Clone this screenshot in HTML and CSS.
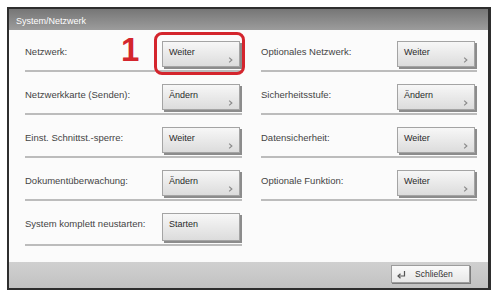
FILE: index.html
```html
<!DOCTYPE html>
<html lang="de">
<head>
    <meta charset="UTF-8">
    <meta name="viewport" content="width=device-width, initial-scale=1.0">
    <title>System/Netzwerk</title>
    <link rel="stylesheet" href="styles.css">
</head>
<body>
    <div class="window">
        <div class="titlebar">System/Netzwerk</div>

        <div class="content">
            <div class="col">
                <div class="row">
                    <span class="label">Netzwerk:</span>
                    <div class="btn-wrap">
                        <span class="step">1</span>
                        <button class="btn">
                            <span>Weiter</span>
                            <svg class="chev" width="7" height="9" viewBox="0 0 7 9"><path d="M1.5 1 L5.5 4.5 L1.5 8" fill="none" stroke="#8a8a8a" stroke-width="1.8"/></svg>
                        </button>
                        <span class="ring"></span>
                    </div>
                </div>
                <div class="row">
                    <span class="label">Netzwerkkarte (Senden):</span>
                    <button class="btn">
                        <span>Ändern</span>
                        <svg class="chev" width="7" height="9" viewBox="0 0 7 9"><path d="M1.5 1 L5.5 4.5 L1.5 8" fill="none" stroke="#8a8a8a" stroke-width="1.8"/></svg>
                    </button>
                </div>
                <div class="row">
                    <span class="label">Einst. Schnittst.-sperre:</span>
                    <button class="btn">
                        <span>Weiter</span>
                        <svg class="chev" width="7" height="9" viewBox="0 0 7 9"><path d="M1.5 1 L5.5 4.5 L1.5 8" fill="none" stroke="#8a8a8a" stroke-width="1.8"/></svg>
                    </button>
                </div>
                <div class="row">
                    <span class="label">Dokumentüberwachung:</span>
                    <button class="btn">
                        <span>Ändern</span>
                        <svg class="chev" width="7" height="9" viewBox="0 0 7 9"><path d="M1.5 1 L5.5 4.5 L1.5 8" fill="none" stroke="#8a8a8a" stroke-width="1.8"/></svg>
                    </button>
                </div>
                <div class="row">
                    <span class="label">System komplett neustarten:</span>
                    <button class="btn btn-tall">
                        <span>Starten</span>
                    </button>
                </div>
            </div>

            <div class="col">
                <div class="row">
                    <span class="label">Optionales Netzwerk:</span>
                    <button class="btn">
                        <span>Weiter</span>
                        <svg class="chev" width="7" height="9" viewBox="0 0 7 9"><path d="M1.5 1 L5.5 4.5 L1.5 8" fill="none" stroke="#8a8a8a" stroke-width="1.8"/></svg>
                    </button>
                </div>
                <div class="row">
                    <span class="label">Sicherheitsstufe:</span>
                    <button class="btn">
                        <span>Ändern</span>
                        <svg class="chev" width="7" height="9" viewBox="0 0 7 9"><path d="M1.5 1 L5.5 4.5 L1.5 8" fill="none" stroke="#8a8a8a" stroke-width="1.8"/></svg>
                    </button>
                </div>
                <div class="row">
                    <span class="label">Datensicherheit:</span>
                    <button class="btn">
                        <span>Weiter</span>
                        <svg class="chev" width="7" height="9" viewBox="0 0 7 9"><path d="M1.5 1 L5.5 4.5 L1.5 8" fill="none" stroke="#8a8a8a" stroke-width="1.8"/></svg>
                    </button>
                </div>
                <div class="row">
                    <span class="label">Optionale Funktion:</span>
                    <button class="btn">
                        <span>Weiter</span>
                        <svg class="chev" width="7" height="9" viewBox="0 0 7 9"><path d="M1.5 1 L5.5 4.5 L1.5 8" fill="none" stroke="#8a8a8a" stroke-width="1.8"/></svg>
                    </button>
                </div>
            </div>
        </div>

        <div class="footer">
            <button class="close-btn">
                <svg width="10" height="9" viewBox="0 0 10 9"><path d="M8.5 1 V6 H2.5" fill="none" stroke="#555" stroke-width="1.2"/><path d="M4.5 3.8 L2 6 L4.5 8.2" fill="none" stroke="#555" stroke-width="1.2"/></svg>
                <span>Schließen</span>
            </button>
        </div>
    </div>
</body>
</html>
```

FILE: styles.css
```css
body {
    margin: 0;
    padding: 7px 0 0 7px;
    background: #ffffff;
    font-family: "Liberation Sans", Arial, sans-serif;
}
.window {
    box-sizing: border-box;
    width: 484px;
    height: 283px;
    border: 2px solid #2e2e2e;
    border-right-width: 3px;
    background: #fbfbfb;
    display: flex;
    flex-direction: column;
}
.titlebar {
    height: 21px;
    box-sizing: border-box;
    padding: 7px 0 0 7px;
    background: linear-gradient(#767676, #9c9c9c);
    color: #ffffff;
    font-size: 9px;
}
.content {
    flex: 1;
    display: grid;
    grid-template-columns: 217px 216px;
    column-gap: 19px;
    padding: 11px 0 0 16px;
}
.row {
    display: flex;
    justify-content: space-between;
    align-items: flex-start;
    padding-bottom: 3px;
    border-bottom: 2px solid #bcbcbc;
    margin-bottom: 12px;
}
.label {
    padding-top: 5px;
    font-size: 9.5px;
    color: #444444;
}
.btn {
    box-sizing: border-box;
    width: 78px;
    height: 26px;
    padding: 5px 5px 3px 6px;
    border: 1px solid #a4a4a4;
    background: linear-gradient(#f7f7f7, #dcdcdc);
    box-shadow: 2px 2px 0 #8c8c8c;
    margin-right: 2px;
    display: flex;
    flex-direction: column;
    justify-content: space-between;
    align-items: flex-start;
    font-family: "Liberation Sans", Arial, sans-serif;
    font-size: 9px;
    color: #2a2a2a;
}
.btn-tall {
    height: 28px;
}
.chev {
    align-self: flex-end;
}
.btn-wrap {
    position: relative;
}
.ring {
    position: absolute;
    left: -8px;
    top: -9px;
    width: 91px;
    height: 43px;
    box-sizing: border-box;
    border: 3.5px solid #d4252d;
    border-radius: 8px;
}
.step {
    position: absolute;
    left: -41px;
    top: -8px;
    font-size: 33px;
    line-height: 1;
    font-weight: bold;
    color: #d4252d;
}
.footer {
    height: 26px;
    box-sizing: border-box;
    background: linear-gradient(#d0d0d0, #c2c2c2);
    display: flex;
    justify-content: flex-end;
    align-items: flex-start;
    padding: 3px 18px 0 0;
}
.close-btn {
    box-sizing: border-box;
    width: 79px;
    height: 18px;
    border: 1px solid #9c9c9c;
    background: linear-gradient(#fafafa, #e8e8e8);
    box-shadow: 1px 1px 0 #7c7c7c;
    display: flex;
    align-items: center;
    gap: 9px;
    padding: 0 0 0 4px;
    font-family: "Liberation Sans", Arial, sans-serif;
    font-size: 8.5px;
    color: #333333;
}
```
